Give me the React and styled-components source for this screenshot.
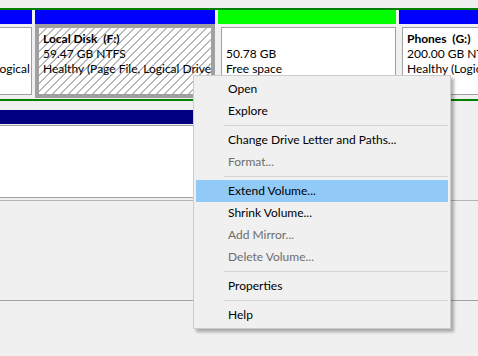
import React from "react";
import styled, { createGlobalStyle } from "styled-components";

const GlobalStyle = createGlobalStyle`
  html, body {
    margin: 0;
    padding: 0;
    background: #f0f0f0;
  }
  body {
    font-family: Lato, "Noto Sans", sans-serif;
    font-size: 12px;
    color: #000000;
  }
`;

const SPage = styled.div`
  position: relative;
  width: 478px;
  height: 356px;
  overflow: hidden;
  background: #f0f0f0;
`;

const SDiskEdge = styled.div`
  height: 8px;
  border-bottom: 2px solid #008000;
`;

const SDiskRow = styled.div`
  overflow: hidden;
  padding-bottom: ${(p) => p.$padBottom}px;
  border-bottom: ${(p) => p.$line};
`;

const SStrip = styled.div`
  display: flex;
  gap: 3px;
  margin-left: -${(p) => p.$scroll}px;
`;

const SCell = styled.div`
  flex: 0 0 ${(p) => p.$width}px;
  min-width: 0;
  display: flex;
  flex-direction: column;
  overflow: hidden;
`;

const SBar = styled.div`
  height: 14px;
  background: ${(p) => p.$color};
`;

const SArea = styled.div`
  padding: ${(p) => (p.$selected ? "3px" : p.$pad)};
  background: ${(p) => (p.$selected ? "#a0a0a0" : "transparent")};
`;

const SBox = styled.div`
  box-sizing: border-box;
  height: ${(p) => p.$height}px;
  border: 1px solid #a0a0a0;
  padding: 3px 4px 2px 4px;
  line-height: 15px;
  white-space: pre;
  overflow: hidden;
  background: ${(p) =>
    p.$hatched
      ? "repeating-linear-gradient(135deg, #ffffff 0px, #ffffff 4.4px, #b8b8b8 4.4px, #b8b8b8 5.66px)"
      : "#ffffff"};
`;

const SLine = styled.div`
  height: 15px;
  font-weight: ${(p) => (p.$bold ? 700 : 400)};
`;

const SGap = styled.div`
  height: 9px;
`;

const SEmptyRow = styled.div`
  height: 99px;
  border-bottom: 1px solid #a0a0a0;
`;

const SMenu = styled.div`
  position: absolute;
  left: 193px;
  top: 75px;
  width: 258px;
  box-sizing: border-box;
  padding: 2px;
  border: 1px solid #cccccc;
  background: #f0f0f0;
  box-shadow: 3px 3px 3px rgba(0, 0, 0, 0.3);
`;

const SItem = styled.div`
  height: 22px;
  line-height: 22px;
  padding-left: 32px;
  color: ${(p) => (p.$disabled ? "#6d6d6d" : "#000000")};
  background: ${(p) => (p.$active ? "#91c9f7" : "transparent")};
  white-space: nowrap;
`;

const SSeparator = styled.div`
  height: 1px;
  margin: 3px 0 3px 28px;
  background: #d4d4d4;
`;

const SCROLL = 164;

const partitions = [
  {
    width: SCROLL + 32,
    color: "#0000ff",
    lines: ["Windows  (C:)", "97.66 GB NTFS", "Healthy (Boot, Crash Dump, Logical Drive)"],
  },
  {
    width: 180,
    color: "#0000ff",
    selected: true,
    lines: ["Local Disk  (F:)", "59.47 GB NTFS", "Healthy (Page File, Logical Drive)"],
  },
  {
    width: 178,
    color: "#00ff00",
    lines: ["", "50.78 GB", "Free space"],
  },
  {
    width: 200,
    color: "#0000ff",
    lines: ["Phones  (G:)", "200.00 GB NTFS", "Healthy (Logical Drive)"],
  },
];

const menu = [
  { label: "Open" },
  { label: "Explore" },
  { sep: true },
  { label: "Change Drive Letter and Paths..." },
  { label: "Format...", disabled: true },
  { sep: true },
  { label: "Extend Volume...", active: true },
  { label: "Shrink Volume..." },
  { label: "Add Mirror...", disabled: true },
  { label: "Delete Volume...", disabled: true },
  { sep: true },
  { label: "Properties" },
  { sep: true },
  { label: "Help" },
];

function Partition({ part }) {
  return (
    <SCell $width={part.width}>
      <SBar $color={part.color} />
      <SArea $selected={part.selected} $pad="3px 0 3px 3px">
        <SBox $height={68} $hatched={part.selected}>
          {part.lines.map((text, i) => (
            <SLine key={i} $bold={i === 0}>
              {text}
            </SLine>
          ))}
        </SBox>
      </SArea>
    </SCell>
  );
}

function ContextMenu() {
  return (
    <SMenu>
      {menu.map((item, i) =>
        item.sep ? (
          <SSeparator key={i} />
        ) : (
          <SItem key={i} $disabled={item.disabled} $active={item.active}>
            {item.label}
          </SItem>
        )
      )}
    </SMenu>
  );
}

export default function App() {
  return (
    <SPage>
      <GlobalStyle />
      <SDiskEdge />
      <SDiskRow $padBottom={1} $line="2px solid #008000">
        <SStrip $scroll={SCROLL}>
          {partitions.map((part, i) => (
            <Partition key={i} part={part} />
          ))}
        </SStrip>
      </SDiskRow>
      <SGap />
      <SDiskRow $padBottom={2} $line="1px solid #b4b4b4">
        <SStrip $scroll={SCROLL}>
          <SCell $width={SCROLL + 352}>
            <SBar $color="#000080" />
            <SArea $pad="1px 0 0 3px">
              <SBox $height={73} />
            </SArea>
          </SCell>
        </SStrip>
      </SDiskRow>
      <SEmptyRow />
      <ContextMenu />
    </SPage>
  );
}
